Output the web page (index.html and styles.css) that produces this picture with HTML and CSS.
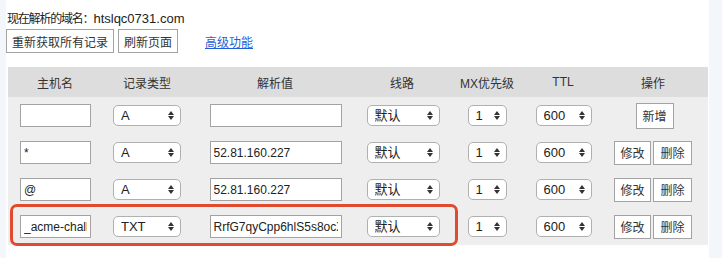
FILE: index.html
```html
<!DOCTYPE html>
<html lang="zh-CN">
<head>
    <meta charset="UTF-8">
    <title>域名解析</title>
    <link rel="stylesheet" href="styles.css">
</head>
<body>
    <div class="page">
        <p class="domain"><span class="label">现在解析的域名：</span>htslqc0731.com</p>
        <div class="toolbar">
            <button class="btn">重新获取所有记录</button>
            <button class="btn">刷新页面</button>
            <a class="advanced" href="#">高级功能</a>
        </div>

        <div class="records">
            <table>
                <colgroup>
                    <col style="width:94px">
                    <col style="width:90px">
                    <col style="width:166px">
                    <col style="width:88px">
                    <col style="width:82px">
                    <col style="width:70px">
                    <col>
                </colgroup>
                <thead>
                    <tr>
                        <th>主机名</th>
                        <th>记录类型</th>
                        <th>解析值</th>
                        <th>线路</th>
                        <th>MX优先级</th>
                        <th>TTL</th>
                        <th>操作</th>
                    </tr>
                </thead>
                <tbody>
                    <tr>
                        <td><input class="host" type="text" value=""></td>
                        <td><span class="sel type"><select><option>A</option></select></span></td>
                        <td><input class="value" type="text" value=""></td>
                        <td><span class="sel line"><select><option>默认</option></select></span></td>
                        <td><span class="sel mx"><select><option>1</option></select></span></td>
                        <td><span class="sel ttl"><select><option>600</option></select></span></td>
                        <td><button class="btn act add">新增</button></td>
                    </tr>
                    <tr>
                        <td><input class="host" type="text" value="*"></td>
                        <td><span class="sel type"><select><option>A</option></select></span></td>
                        <td><input class="value" type="text" value="52.81.160.227"></td>
                        <td><span class="sel line"><select><option>默认</option></select></span></td>
                        <td><span class="sel mx"><select><option>1</option></select></span></td>
                        <td><span class="sel ttl"><select><option>600</option></select></span></td>
                        <td><button class="btn act">修改</button><button class="btn act">删除</button></td>
                    </tr>
                    <tr>
                        <td><input class="host" type="text" value="@"></td>
                        <td><span class="sel type"><select><option>A</option></select></span></td>
                        <td><input class="value" type="text" value="52.81.160.227"></td>
                        <td><span class="sel line"><select><option>默认</option></select></span></td>
                        <td><span class="sel mx"><select><option>1</option></select></span></td>
                        <td><span class="sel ttl"><select><option>600</option></select></span></td>
                        <td><button class="btn act">修改</button><button class="btn act">删除</button></td>
                    </tr>
                    <tr>
                        <td><input class="host" type="text" value="_acme-challenge"></td>
                        <td><span class="sel type"><select><option>TXT</option></select></span></td>
                        <td><input class="value" type="text" value="RrfG7qyCpp6hlS5s8ocXq2"></td>
                        <td><span class="sel line"><select><option>默认</option></select></span></td>
                        <td><span class="sel mx"><select><option>1</option></select></span></td>
                        <td><span class="sel ttl"><select><option>600</option></select></span></td>
                        <td><button class="btn act">修改</button><button class="btn act">删除</button></td>
                    </tr>
                </tbody>
            </table>
            <div class="highlight"></div>
        </div>
    </div>
</body>
</html>
```

FILE: styles.css
```css
* {
    margin: 0;
    padding: 0;
    box-sizing: border-box;
}

body {
    background: #f3f6fa;
    font-family: 'Liberation Sans', 'Noto Sans CJK SC', sans-serif;
    color: #222;
}

.page {
    width: 703px;
    min-height: 100vh;
    margin-left: 6px;
    padding-top: 11px;
    background: #fff;
}

.domain {
    font-size: 13px;
    line-height: 15px;
    padding-left: 1px;
}

.domain .label {
    font-size: 12px;
    letter-spacing: -1.2px;
}

.toolbar {
    display: flex;
    align-items: center;
    margin-top: 2px;
}

.btn {
    height: 24px;
    padding: 0 5px;
    border: 1px solid #a3a3a3;
    background: #fff;
    font-family: inherit;
    font-size: 12px;
    color: #333;
}

.toolbar .btn + .btn {
    margin-left: 4px;
}

.advanced {
    margin-left: 27px;
    font-size: 12px;
    color: #1f5fd6;
    text-decoration: underline;
}

.records {
    position: relative;
    margin: 14px 0 0 2px;
}

table {
    width: 700px;
    table-layout: fixed;
    border-collapse: collapse;
    font-size: 12px;
}

th {
    height: 30px;
    background: #dddddd;
    font-weight: normal;
    font-size: 12px;
    color: #333;
}

td {
    height: 37px;
    background: #eeeeee;
    text-align: center;
    vertical-align: middle;
    font-size: 0;
}

input {
    height: 23px;
    border: 1px solid #a3a3a3;
    padding: 0 3px;
    font-family: inherit;
    font-size: 12px;
    color: #222;
    vertical-align: middle;
    background: #fff;
}

.host {
    width: 71px;
    margin-left: 1px;
}

.value {
    width: 132px;
    margin-left: 1px;
}

.sel {
    position: relative;
    display: inline-block;
    vertical-align: middle;
}

.sel select {
    appearance: none;
    -webkit-appearance: none;
    width: 100%;
    height: 21px;
    padding-left: 7px;
    border: 1px solid #b0b0b0;
    border-radius: 5px;
    background: #fff;
    font-family: inherit;
    font-size: 13px;
    color: #222;
}

.sel::before,
.sel::after {
    content: "";
    position: absolute;
    right: 7px;
    border-left: 3px solid transparent;
    border-right: 3px solid transparent;
}

.sel::before {
    top: 6px;
    border-bottom: 4px solid #333;
}

.sel::after {
    top: 11px;
    border-top: 4px solid #333;
}

.type { width: 68px; }
.line { width: 73px; margin-left: 2px; }
.mx { width: 39px; }
.ttl { width: 56px; margin-left: 1px; }

.act {
    width: 37px;
    height: 24px;
    padding: 0;
    margin: 0 1px;
    vertical-align: middle;
}

.act + .act {
    width: 39px;
}

.add {
    width: 38px;
    height: 26px;
    margin-left: 4px;
}

.highlight {
    position: absolute;
    left: 2px;
    top: 137px;
    width: 448px;
    height: 42px;
    border: 3px solid #e04a2f;
    border-radius: 7px;
}
```
